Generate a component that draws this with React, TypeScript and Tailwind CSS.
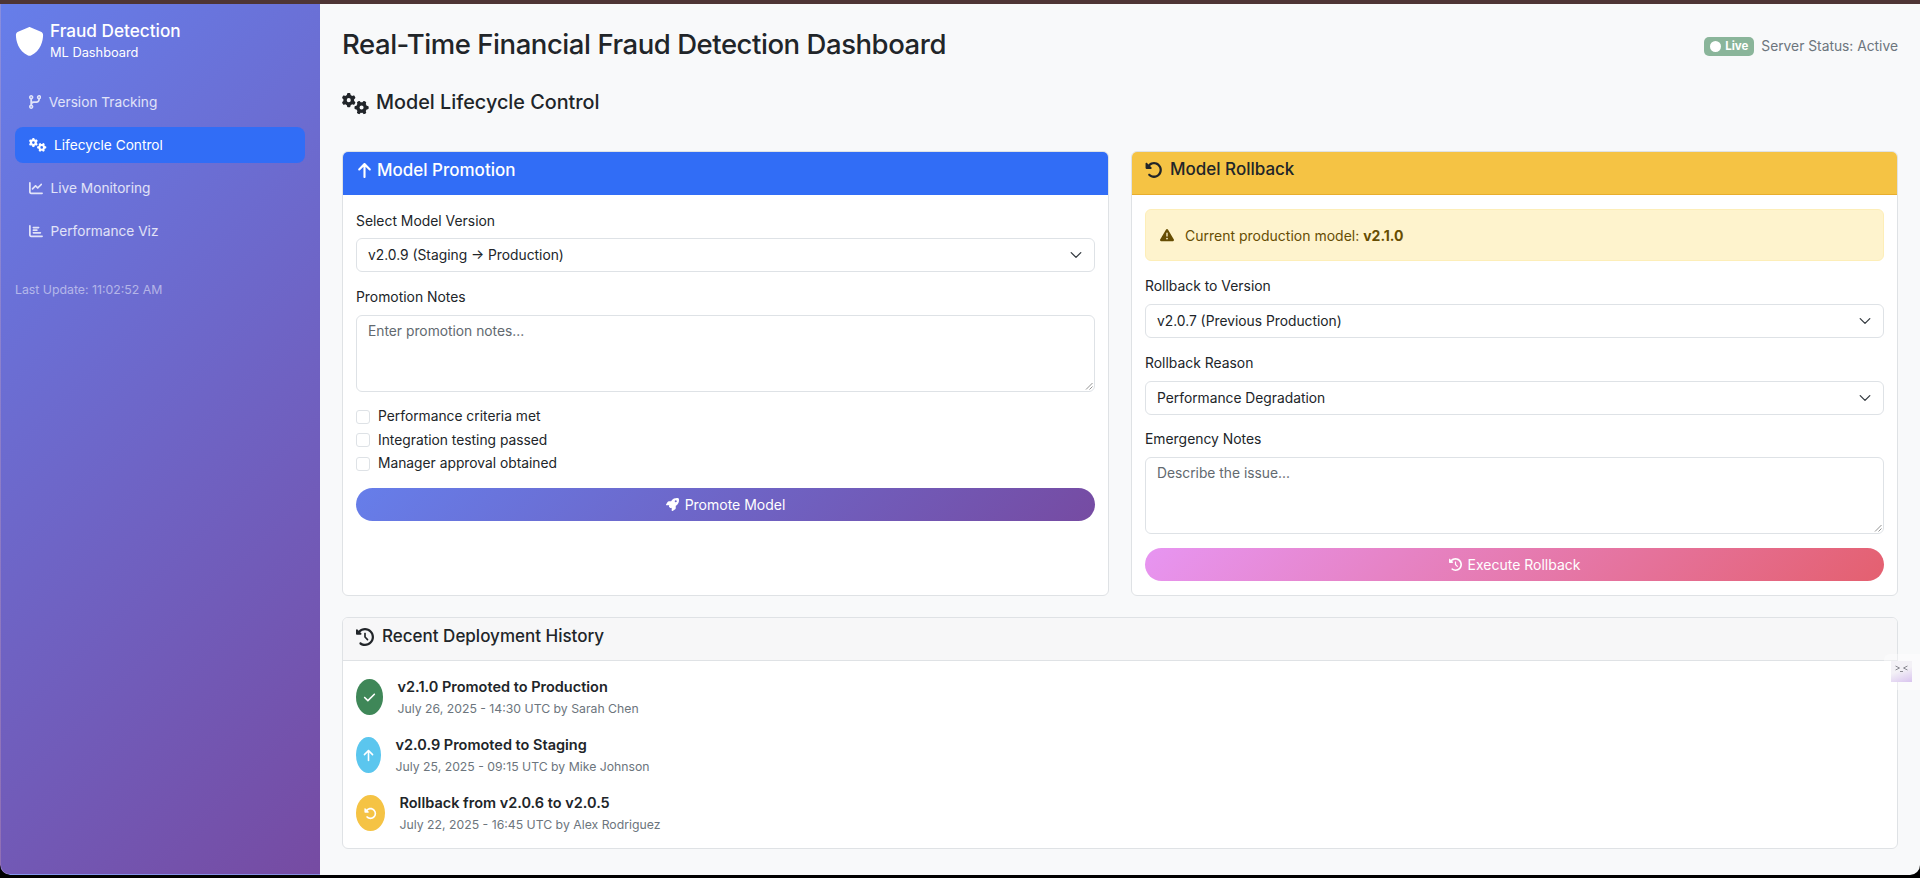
import { FaShield, FaCodeBranch, FaGears, FaChartLine, FaChartBar, FaArrowUp, FaRotateLeft, FaClockRotateLeft, FaRocket, FaTriangleExclamation, FaCheck, FaCircle } from "react-icons/fa6";
import type { ReactNode } from "react";

const font = "font-['Inter','Liberation_Sans',sans-serif]";

function NavItem({ icon, label, active }: { icon: ReactNode; label: string; active?: boolean }) {
  return (
    <div className={`flex h-[36px] items-center gap-[7.5px] rounded-lg pl-[14px] text-[13.7px] ${active ? "bg-[#316df6] text-white" : "text-white/80"}`}>
      {icon}
      <span>{label}</span>
    </div>
  );
}

function Chevron() {
  return (
    <svg width="16" height="16" viewBox="0 0 16 16" fill="none" className="shrink-0">
      <path d="M2 5l6 6 6-6" stroke="#343a40" strokeWidth="1.6" strokeLinecap="round" strokeLinejoin="round" transform="translate(1.6 1.6) scale(0.8)" />
    </svg>
  );
}

function SelectBox({ value }: { value: string }) {
  return (
    <div className="flex h-[34px] items-center justify-between rounded-md border border-[#dee2e6] bg-white pl-[11px] pr-[10px] text-[13.8px] text-[#212529]">
      <span>{value}</span>
      <Chevron />
    </div>
  );
}

function TextArea({ placeholder }: { placeholder: string }) {
  return (
    <div className="relative h-[77px] rounded-md border border-[#dee2e6] bg-white px-[11px] pt-[5px] text-[13.8px] leading-[21px] text-[#62696f]">
      {placeholder}
      <svg width="8" height="8" viewBox="0 0 8 8" className="absolute bottom-[1px] right-[1px]">
        <path d="M1 7.5L7.5 1M4.5 7.5L7.5 4.5" stroke="#777" strokeWidth="0.8" />
      </svg>
    </div>
  );
}

function Check({ label }: { label: string }) {
  return (
    <div className="flex h-[23.5px] items-center gap-[8px] text-[13.8px] text-[#212529]">
      <span className="inline-block h-[14px] w-[14px] rounded-[3px] border border-[#dee2e6] bg-white" />
      <span>{label}</span>
    </div>
  );
}

function Label({ children }: { children: ReactNode }) {
  return <div className="h-[21px] text-[13.9px] leading-[21px] text-[#212529]">{children}</div>;
}

function HistoryRow({ color, icon, title, sub, w }: { color: string; icon: ReactNode; title: string; sub: string; w: string }) {
  return (
    <div className="flex h-[36px] items-center gap-[14.5px]">
      <div className={`flex h-[36px] ${w} items-center justify-center rounded-[50%] text-white ${color}`}>{icon}</div>
      <div>
        <div className="text-[14.5px] leading-[21px] font-semibold text-[#212529]">{title}</div>
        <div className="mt-[3px] text-[12.25px] leading-[18px] text-[#6c757d]">{sub}</div>
      </div>
    </div>
  );
}

export default function App() {
  return (
    <div className={`relative flex h-[878px] w-[1920px] flex-col overflow-hidden bg-black pb-[3px] ${font}`}>
      <div className="h-[4px] shrink-0 bg-[#4e3535]" />
      <div className="flex min-h-0 flex-1 overflow-hidden rounded-b-[10px]">
        <aside className="flex w-[320px] shrink-0 flex-col rounded-bl-[10px] border-b border-l border-white/20 bg-[linear-gradient(135deg,#667eea,#764ba2)] pr-[15px] pl-[14px] pt-[16px]">
          <div className="flex items-center gap-[6px]">
            <FaShield className="text-white" size={29} />
            <div>
              <div className="text-[17.2px] leading-[21px] font-medium text-white">Fraud Detection</div>
              <div className="mt-[3px] text-[12.8px] leading-[18px] text-white">ML Dashboard</div>
            </div>
          </div>
          <nav className="mt-[22px] flex flex-col gap-[7px]">
            <NavItem icon={<FaCodeBranch size={14} className="h-[14px] w-[12.25px]" />} label="Version Tracking" />
            <NavItem icon={<FaGears size={17.5} />} label="Lifecycle Control" active />
            <NavItem icon={<FaChartLine size={14} />} label="Live Monitoring" />
            <NavItem icon={<FaChartBar size={14} />} label="Performance Viz" />
          </nav>
          <div className="mt-[32px] text-[12.3px] leading-[18px] text-white/50">Last Update: 11:02:52 AM</div>
        </aside>
        <main className="flex min-w-0 flex-1 flex-col bg-[#f8f9fa] px-[22px] pt-[20px]">
          <header className="flex h-[39px] items-center justify-between">
            <h1 className="text-[27.5px] leading-[34px] font-medium tracking-[-0.45px] text-[#212529]">Real-Time Financial Fraud Detection Dashboard</h1>
            <div className="mt-[6px] flex items-center gap-[7px]">
              <span className="flex h-[19px] items-center gap-[4px] rounded-[5px] bg-[#8ab59a] px-[6px] text-[11.5px] font-bold text-white">
                <FaCircle size={11} />
                Live
              </span>
              <span className="text-[13.8px] text-[#6c757d]">Server Status: Active</span>
            </div>
          </header>
          <div className="mt-[25px] flex h-[30px] items-center gap-[7px]">
            <FaGears size={27} className="text-[#212529]" />
            <h2 className="text-[19.8px] font-medium text-[#212529]">Model Lifecycle Control</h2>
          </div>
          <div className="mt-[33px] flex h-[445px] gap-[22px]">
            <section className="flex min-w-0 flex-1 flex-col overflow-hidden rounded-md border border-[#dfe2e5] bg-white">
              <div className="flex h-[43px] shrink-0 items-center gap-[4px] bg-[#316df6] px-[13px] pb-[6px] text-[17px] font-medium text-white">
                <FaArrowUp size={17} />
                <span>Model Promotion</span>
              </div>
              <div className="flex flex-1 flex-col px-[13px] pt-[16px]">
                <Label>Select Model Version</Label>
                <div className="mt-[6px]"><SelectBox value="v2.0.9 (Staging → Production)" /></div>
                <div className="mt-[15px]"><Label>Promotion Notes</Label></div>
                <div className="mt-[7px]"><TextArea placeholder="Enter promotion notes..." /></div>
                <div className="mt-[13px] flex flex-col"><Check label="Performance criteria met" /><Check label="Integration testing passed" /><Check label="Manager approval obtained" /></div>
                <button className="mt-[12px] flex h-[33px] items-center justify-center gap-[6px] rounded-full bg-[linear-gradient(135deg,#667eea,#764ba2)] text-[14px] text-white">
                  <FaRocket size={13} />
                  Promote Model
                </button>
              </div>
            </section>
            <section className="flex min-w-0 flex-1 flex-col overflow-hidden rounded-md border border-[#dfe2e5] bg-white">
              <div className="flex h-[43px] shrink-0 items-center gap-[7px] border-b border-[#e8ae2e] bg-[#f5c344] px-[13px] pb-[6px] text-[17px] font-medium text-[#212529]">
                <FaRotateLeft size={18} />
                <span>Model Rollback</span>
              </div>
              <div className="flex flex-1 flex-col px-[13px] pt-[14px]">
                <div className="flex h-[52px] items-center gap-[11px] rounded-md border border-[#fdeeb8] bg-[#fef3cd] px-[14px] text-[14px] text-[#664d03]">
                  <FaTriangleExclamation size={14} />
                  <span>Current production model: <strong className="font-bold">v2.1.0</strong></span>
                </div>
                <div className="mt-[15px]"><Label>Rollback to Version</Label></div>
                <div className="mt-[7px]"><SelectBox value="v2.0.7 (Previous Production)" /></div>
                <div className="mt-[15px]"><Label>Rollback Reason</Label></div>
                <div className="mt-[7px]"><SelectBox value="Performance Degradation" /></div>
                <div className="mt-[14px]"><Label>Emergency Notes</Label></div>
                <div className="mt-[7px]"><TextArea placeholder="Describe the issue..." /></div>
                <button className="mt-[14px] flex h-[33px] items-center justify-center gap-[6px] rounded-full bg-[linear-gradient(135deg,#e795f2,#e4606f)] text-[14px] text-white">
                  <FaClockRotateLeft size={13} />
                  Execute Rollback
                </button>
              </div>
            </section>
          </div>
          <section className="mt-[21px] overflow-hidden rounded-md border border-[#dfe2e5] bg-white">
            <div className="flex h-[43px] items-center gap-[8px] border-b border-[#dfe2e5] bg-[#f7f7f8] px-[13px] pb-[5px] text-[17px] font-medium text-[#212529]">
              <FaClockRotateLeft size={18} />
              <span>Recent Deployment History</span>
            </div>
            <div className="flex flex-col gap-[22px] px-[13px] pt-[18px] pb-[17px]">
              <HistoryRow color="bg-[#3f8758]" w="w-[27px]" icon={<FaCheck size={13} />} title="v2.1.0 Promoted to Production" sub="July 26, 2025 - 14:30 UTC by Sarah Chen" />
              <HistoryRow color="bg-[#5bc6ee]" w="w-[25px]" icon={<FaArrowUp size={13} />} title="v2.0.9 Promoted to Staging" sub="July 25, 2025 - 09:15 UTC by Mike Johnson" />
              <HistoryRow color="bg-[#f5c344]" w="w-[29px]" icon={<FaRotateLeft size={13} />} title="Rollback from v2.0.6 to v2.0.5" sub="July 22, 2025 - 16:45 UTC by Alex Rodriguez" />
            </div>
          </section>
        </main>
      </div>
      <div className="absolute right-0 top-[654px] flex h-[36px] w-[36px] items-start rounded-l-md bg-white/40 pl-[7px] pt-[7px]">
        <div className="h-[21px] w-[21px] bg-[linear-gradient(160deg,#f3f1f6_45%,#d9c4ef)]">
          <svg width="21" height="21" viewBox="0 0 21 21" fill="none" stroke="#8a8a92" strokeWidth="1">
            <path d="M4.5 5l4 2-4 2M16.5 5l-4 2 4 2M9 10.5h3" />
          </svg>
        </div>
      </div>
    </div>
  );
}
